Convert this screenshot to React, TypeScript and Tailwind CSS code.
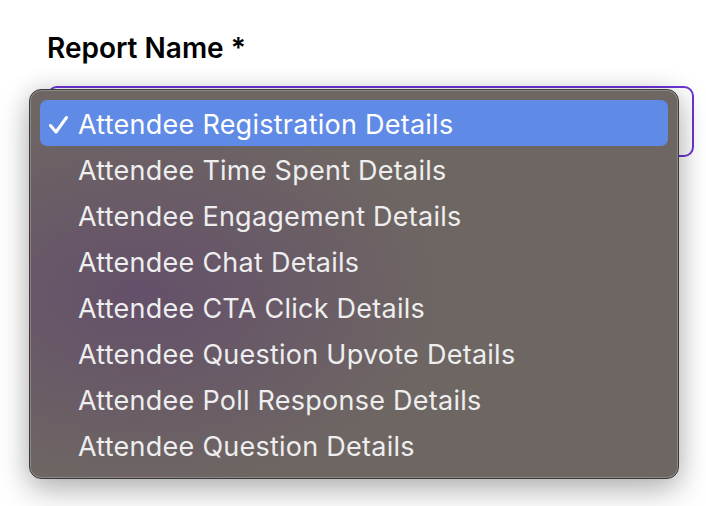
const items = [
  "Attendee Registration Details",
  "Attendee Time Spent Details",
  "Attendee Engagement Details",
  "Attendee Chat Details",
  "Attendee CTA Click Details",
  "Attendee Question Upvote Details",
  "Attendee Poll Response Details",
  "Attendee Question Details",
];

export default function App() {
  return (
    <div className="relative h-[506px] w-[706px] overflow-hidden bg-white pl-[47px] pt-[31px] font-['Inter',sans-serif]">
      <div className="text-[28px] font-semibold leading-[34px] text-black">Report Name *</div>
      <div className="mt-[21px] h-[71px] w-[647px] rounded-[10px] border-2 border-[#6d35d6] bg-white" />
      <div className="absolute left-[29px] top-[89px] h-[390px] w-[650px] rounded-[12px] border border-[#3a3a3a] bg-[radial-gradient(ellipse_300px_190px_at_110px_205px,#64506a_0%,#6a5d66_60%,#6e6663_100%)] px-[10px] pt-[10px] shadow-[0_12px_32px_rgba(0,0,0,0.26),0_0_24px_rgba(0,0,0,0.12),inset_0_0_0_1px_rgba(255,255,255,0.22)]">
        {items.map((item, i) => (
          <div
            key={item}
            className={`flex h-[46px] items-center rounded-[7px] pl-[38px] pt-[4px] text-[27px] leading-[42px] tracking-[0.25px] ${
              i === 0 ? "relative bg-[#5f8ae5] text-white" : "text-[#eeeeee]"
            }`}
          >
            {i === 0 && (
              <svg className="absolute left-[9px] top-[15px]" width="20" height="20" viewBox="0 0 20 20" fill="none">
                <path d="M1.5 10.5 L7 17 L17.5 2.5" stroke="white" strokeWidth="3" strokeLinecap="round" strokeLinejoin="round" />
              </svg>
            )}
            {item}
          </div>
        ))}
      </div>
    </div>
  );
}
